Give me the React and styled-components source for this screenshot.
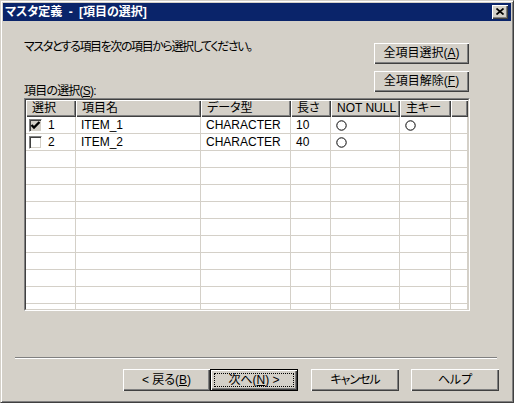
import React from 'react';
import styled, { createGlobalStyle } from 'styled-components';

const GlobalStyle = createGlobalStyle`
  html, body { margin: 0; padding: 0; background: #d4d0c8; }
  body {
    font-family: "Liberation Sans", "Noto Sans CJK JP", sans-serif;
    font-size: 12px;
    font-feature-settings: "palt";
    color: #000;
  }
  * { box-sizing: border-box; }
`;

const Window = styled.div`
  width: 514px;
  height: 403px;
  background: #d4d0c8;
  border: 1px solid;
  border-color: #d4d0c8 #404040 #404040 #d4d0c8;
  box-shadow: inset 1px 1px #fff, inset -1px -1px #808080;
  padding: 2px;
  display: flex;
  flex-direction: column;
`;

const TitleBar = styled.div`
  height: 18px;
  flex: none;
  background: #0a246a;
  color: #fff;
  font-weight: bold;
  display: flex;
  align-items: center;
  justify-content: space-between;
  padding: 0 3px 0 2px;
  line-height: 18px;
  word-spacing: 3px;
`;

const CloseButton = styled.div`
  width: 16px;
  height: 14px;
  background: #d4d0c8;
  box-shadow: inset 1px 1px #fff, inset -1px -1px #404040, inset -2px -2px #808080;
  display: flex;
  align-items: center;
  justify-content: center;
  padding: 0 1px 1px 0;
`;

const Content = styled.div`
  flex: 1;
  display: flex;
  flex-direction: column;
`;

const TopSection = styled.div`
  display: flex;
  justify-content: space-between;
  height: 58px;
  margin: 19px 42px 0 21px;
`;

const LeftCol = styled.div`
  display: flex;
  flex-direction: column;
  justify-content: space-between;
`;

const TextLine = styled.div`
  line-height: 14px;
  white-space: nowrap;
  letter-spacing: ${p => p.$ls || 0}px;
`;

const ButtonCol = styled.div`
  display: flex;
  flex-direction: column;
  gap: 7px;
  padding-top: 3px;
`;

const Button = styled.div`
  position: relative;
  width: ${p => p.$w}px;
  height: ${p => p.$h}px;
  margin-left: ${p => p.$ml || 0}px;
  background: #d4d0c8;
  display: flex;
  align-items: center;
  justify-content: center;
  white-space: nowrap;
  line-height: 14px;
  letter-spacing: ${p => p.$ls || 0}px;
  border: ${p => (p.$default ? '1px solid #000' : 'none')};
  box-shadow: inset 1px 1px #fff, inset -1px -1px #404040, inset -2px -2px #808080;
  padding-bottom: 1px;
  ${p =>
    p.$default &&
    `&::after {
      content: '';
      position: absolute;
      left: 3px; top: 3px; right: 3px; bottom: 3px;
      border: 1px dotted #000;
    }`}
`;

const Key = styled.span`
  text-decoration: underline;
  text-underline-offset: 1px;
`;

const GridOuter = styled.div`
  margin-left: 21px;
  width: 446px;
  height: 213px;
  flex: none;
  border: 1px solid;
  border-color: #808080 #fff #fff #808080;
`;

const GridInner = styled.div`
  width: 100%;
  height: 100%;
  border: 1px solid;
  border-color: #404040 #d4d0c8 #d4d0c8 #404040;
  background: #fff;
  overflow: hidden;
`;

const COLS = '50px 125px 90px 40px 69px 51px 17px';

const HeaderRow = styled.div`
  display: grid;
  grid-template-columns: ${COLS};
  height: 17px;
`;

const HeaderCell = styled.div`
  background: #d4d0c8;
  box-shadow: inset 1px 1px #fff, inset -1px -1px #404040, inset -2px -2px #808080;
  line-height: 16px;
  padding-left: 6px;
  white-space: nowrap;
  overflow: hidden;
`;

const Row = styled.div`
  display: grid;
  grid-template-columns: ${COLS};
  height: 17px;
`;

const Cell = styled.div`
  border-right: 1px solid #d4d0c8;
  border-bottom: 1px solid #d4d0c8;
  line-height: 16px;
  padding-left: ${p => p.$pl ?? 5}px;
  display: flex;
  align-items: center;
  white-space: nowrap;
  overflow: hidden;
  gap: 6px;
`;

const CheckBox = styled.div`
  width: 13px;
  height: 13px;
  flex: none;
  border: 1px solid;
  border-color: #808080 #fff #fff #808080;
  box-shadow: inset 1px 1px #404040, inset -1px -1px #d4d0c8;
  background: ${p => (p.$checked ? '#d4d0c8' : '#fff')};
  display: flex;
  align-items: center;
  justify-content: center;
`;

const Separator = styled.div`
  margin: 46px 14px 0 12px;
  height: 2px;
  border-top: 1px solid #808080;
  border-bottom: 1px solid #fff;
`;

const ButtonRow = styled.div`
  display: flex;
  justify-content: flex-end;
  margin: 10px 12px 0 0;
`;

const Circle = () => (
  <svg width="11" height="11" viewBox="0 0 11 11">
    <circle cx="5.5" cy="5.5" r="4.7" fill="none" stroke="#000" strokeWidth="1" />
  </svg>
);

const Check = () => (
  <svg width="11" height="11" viewBox="0 0 11 11">
    <path d="M1.5 5 L4 7.5 L9.5 2" fill="none" stroke="#000" strokeWidth="2.4" />
  </svg>
);

const headers = ['選択', '項目名', 'データ型', '長さ', 'NOT NULL', '主キー', ''];

const data = [
  { checked: true, no: '1', name: 'ITEM_1', type: 'CHARACTER', len: '10', notNull: true, pk: true },
  { checked: false, no: '2', name: 'ITEM_2', type: 'CHARACTER', len: '40', notNull: true, pk: false },
];

export default function App() {
  const empty = Array.from({ length: 10 });
  return (
    <>
      <GlobalStyle />
      <Window>
        <TitleBar>
          <span>マスタ定義 - [項目の選択]</span>
          <CloseButton>
            <svg width="8" height="7" viewBox="0 0 8 7">
              <path d="M0.5 0.5 L7.5 6.5 M7.5 0.5 L0.5 6.5" stroke="#000" strokeWidth="1.7" />
            </svg>
          </CloseButton>
        </TitleBar>
        <Content>
          <TopSection>
            <LeftCol>
              <TextLine $ls={-1.4}>マスタとする項目を次の項目から選択してください。</TextLine>
              <TextLine $ls={-0.8}>
                項目の選択(<Key>S</Key>):
              </TextLine>
            </LeftCol>
            <ButtonCol>
              <Button $w={95} $h={21}>
                全項目選択(<Key>A</Key>)
              </Button>
              <Button $w={95} $h={21}>
                全項目解除(<Key>F</Key>)
              </Button>
            </ButtonCol>
          </TopSection>
          <GridOuter>
            <GridInner>
              <HeaderRow>
                {headers.map((h, i) => (
                  <HeaderCell key={i}>{h}</HeaderCell>
                ))}
              </HeaderRow>
              {data.map(r => (
                <Row key={r.no}>
                  <Cell $pl={3}>
                    <CheckBox $checked={r.checked}>{r.checked && <Check />}</CheckBox>
                    <span>{r.no}</span>
                  </Cell>
                  <Cell>{r.name}</Cell>
                  <Cell>{r.type}</Cell>
                  <Cell>{r.len}</Cell>
                  <Cell>{r.notNull && <Circle />}</Cell>
                  <Cell>{r.pk && <Circle />}</Cell>
                  <Cell />
                </Row>
              ))}
              {empty.map((_, i) => (
                <Row key={'e' + i}>
                  {headers.map((h, j) => (
                    <Cell key={j} />
                  ))}
                </Row>
              ))}
            </GridInner>
          </GridOuter>
          <Separator />
          <ButtonRow>
            <Button $w={87} $h={22}>
              &lt; 戻る(<Key>B</Key>)
            </Button>
            <Button $w={88} $h={22} $default>
              次へ(<Key>N</Key>) &gt;
            </Button>
            <Button $w={88} $h={22} $ml={13} $ls={-1}>
              キャンセル
            </Button>
            <Button $w={88} $h={22} $ml={12}>
              ヘルプ
            </Button>
          </ButtonRow>
        </Content>
      </Window>
    </>
  );
}
